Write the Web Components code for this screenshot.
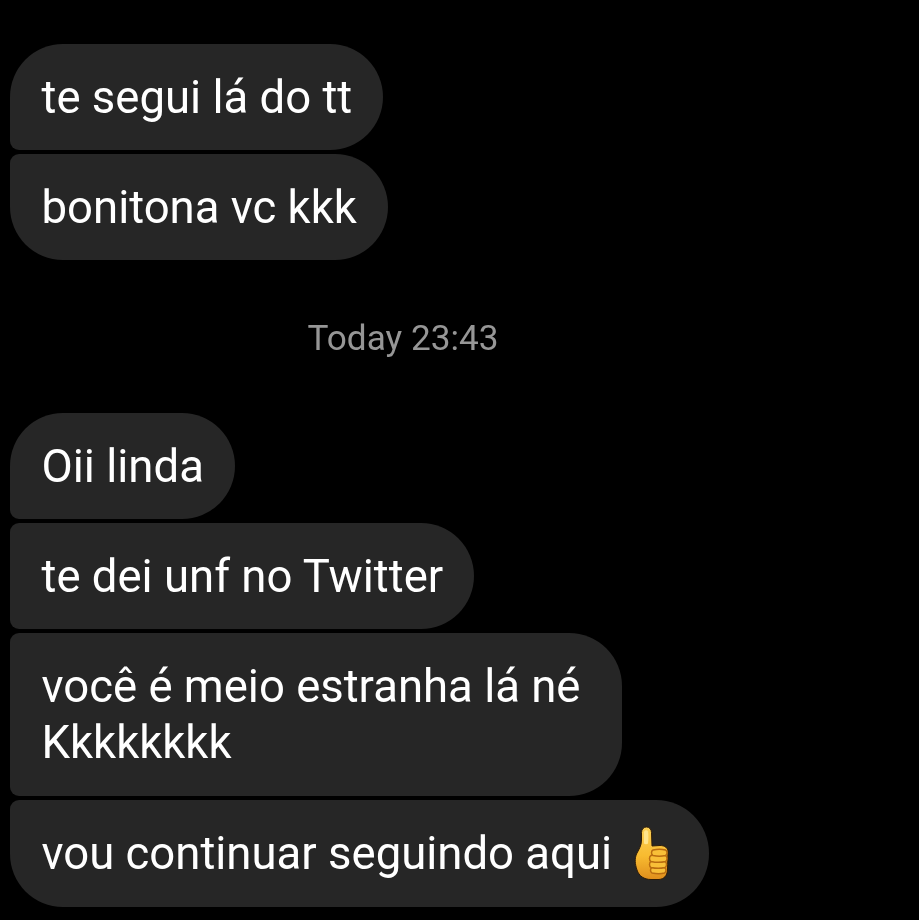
<!DOCTYPE html>
<html lang="pt">
<head>
<meta charset="utf-8">
<title>Chat</title>
<style>
  html, body { margin: 0; background: #000; }
</style>
</head>
<body>
<chat-thread>
  <chat-bubble pos="first">te segui lá do tt</chat-bubble>
  <chat-bubble pos="last">bonitona vc kkk</chat-bubble>
  <chat-time>Today 23:43</chat-time>
  <chat-bubble pos="first">Oii linda</chat-bubble>
  <chat-bubble>te dei unf no Twitter</chat-bubble>
  <chat-bubble wide>você é meio estranha lá né<br>Kkkkkkkk</chat-bubble>
  <chat-bubble pos="last">vou continuar seguindo aqui <thumb-emoji></thumb-emoji></chat-bubble>
</chat-thread>
<script>
const threadTemplate = document.createElement('template');
threadTemplate.innerHTML = `
  <style>
  :host {
    display: flex;
    flex-direction: column;
    align-items: flex-start;
    gap: 4px;
    width: 919px;
    height: 920px;
    box-sizing: border-box;
    padding: 44px 0 0 10px;
    background: #000;
    overflow: hidden;
    font-family: Roboto, "Liberation Sans", sans-serif;
    filter: blur(0.35px);
  }
  </style>
  <slot></slot>
`;
class ChatThread extends HTMLElement {
  constructor() {
    super();
    this.attachShadow({ mode: 'open' });
    this.shadowRoot.appendChild(threadTemplate.content.cloneNode(true));
  }
}

const bubbleTemplate = document.createElement('template');
bubbleTemplate.innerHTML = `
  <style>
  :host {
    display: block;
    box-sizing: border-box;
    padding: 26px 31px 24px 31.500px;
    background: #262626;
    color: #fff;
    font-size: 45.500px;
    line-height: 56px;
    white-space: nowrap;
    border-radius: 53px;
    border-top-left-radius: 9px;
    border-bottom-left-radius: 9px;
  }
  :host([pos="first"]) { border-top-left-radius: 53px; }
  :host([pos="last"]) { border-bottom-left-radius: 53px; }
  :host([wide]) { padding-right: 42px; padding-bottom: 25px; }
  :host(:last-child) { padding-bottom: 25px; }
  </style>
  <slot></slot>
`;
class ChatBubble extends HTMLElement {
  constructor() {
    super();
    this.attachShadow({ mode: 'open' });
    this.shadowRoot.appendChild(bubbleTemplate.content.cloneNode(true));
  }
}

const timeTemplate = document.createElement('template');
timeTemplate.innerHTML = `
  <style>
  :host {
    display: block;
    align-self: stretch;
    box-sizing: border-box;
    height: 145px;
    padding: 52px 0 0 297.500px;
    color: #969696;
    font-size: 35.200px;
    line-height: 44px;
  }
  </style>
  <slot></slot>
`;
class ChatTime extends HTMLElement {
  constructor() {
    super();
    this.attachShadow({ mode: 'open' });
    this.shadowRoot.appendChild(timeTemplate.content.cloneNode(true));
  }
}

const thumbTemplate = document.createElement('template');
thumbTemplate.innerHTML = `
  <style>
  :host {
    display: inline-block;
    width: 38px;
    height: 56px;
    vertical-align: top;
    margin: 0 7px 0 10px;
  }
  svg { display: block; width: 38px; height: 56px; overflow: visible; }
  </style>
  <svg viewBox="0 0 38 56" aria-hidden="true">
    <defs>
      <linearGradient id="skin" x1="0" y1="0" x2="0" y2="1">
        <stop offset="0" stop-color="#fbcf55"/>
        <stop offset=".55" stop-color="#f8bb30"/>
        <stop offset="1" stop-color="#e08e1c"/>
      </linearGradient>
    </defs>
    <path d="M8.500 6.500C8.500 3 11 1 13.500 1S18.500 3 18.500 6.500L19 20 27 19.500c5 0 8 2.500 8 6.500l-.5 18c-.5 6-3.500 9-8.500 9.500h-8c-7 0-12-3.500-14-9.500-2-6-2.500-11-.5-16 2-4 5-8 5-14z" fill="url(#skin)" stroke="#2e1c08" stroke-width="1"/>
    <path d="M11 6c.5-2 3-2.500 4-.5.5 3 .5 8 0 12-1 1-3 1-4 0z" fill="#ffe48a"/>
    <g fill="#f8bf38" stroke="#b96c10" stroke-width="1.500">
      <path d="M19 41.500c4-1 9-1 12.500 0 2 1 2 4.500 0 5.500-3.500 1-8 1-12.500 0-2-1-2-4.500 0-5.500z"/>
      <path d="M18 35.500c4.500-1 10-1 14 0 2 1 2 5 0 6-4 1-9.500 1-14 0-2-1-2-5 0-6z"/>
      <path d="M18 29.500c4.500-1 10.500-1 14.500 0 2 1 2 5 0 6-4 1-10 1-14.500 0-2-1-2-5 0-6z"/>
      <path d="M20 24c4-1 9-1 12.500 0 2 1 2 4.500 0 5.500-4 1-8.500 1-12.500 0-2-1-2-4.500 0-5.500z"/>
    </g>
  </svg>
`;
class ThumbEmoji extends HTMLElement {
  constructor() {
    super();
    this.attachShadow({ mode: 'open' });
    this.shadowRoot.appendChild(thumbTemplate.content.cloneNode(true));
  }
}

window.customElements.define('chat-thread', ChatThread);
window.customElements.define('chat-bubble', ChatBubble);
window.customElements.define('chat-time', ChatTime);
window.customElements.define('thumb-emoji', ThumbEmoji);
</script>
</body>
</html>
